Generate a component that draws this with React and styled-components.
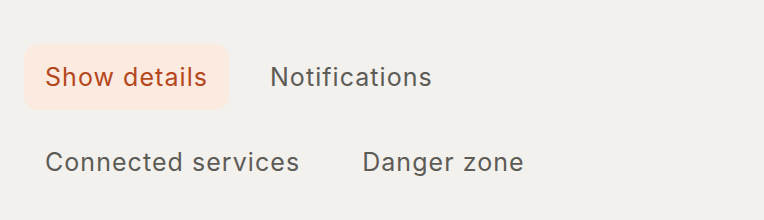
import styled, { createGlobalStyle } from 'styled-components';

const GlobalStyle = createGlobalStyle`
  html, body {
    margin: 0;
    background: #f3f1ed;
  }
  body {
    font-family: Inter, "Noto Sans", sans-serif;
  }
`;

const Page = styled.div`
  padding: 44px 24px 24px;
`;

const TabList = styled.nav`
  display: flex;
  flex-wrap: wrap;
  gap: 19px 20px;
  max-width: 560px;
`;

const Tab = styled.button`
  border: 0;
  border-radius: 14px;
  padding: 0 21px;
  height: 66px;
  font-family: inherit;
  font-size: 25px;
  letter-spacing: 1.05px;
  font-weight: 400;
  cursor: pointer;
  background: ${p => (p.$active ? '#fbeae0' : 'transparent')};
  color: ${p => (p.$active ? '#b4471b' : '#5d5b56')};
`;

const tabs = ['Show details', 'Notifications', 'Connected services', 'Danger zone'];

export default function App() {
  return (
    <Page>
      <GlobalStyle />
      <TabList>
        {tabs.map((t, i) => (
          <Tab key={t} $active={i === 0}>
            {t}
          </Tab>
        ))}
      </TabList>
    </Page>
  );
}
